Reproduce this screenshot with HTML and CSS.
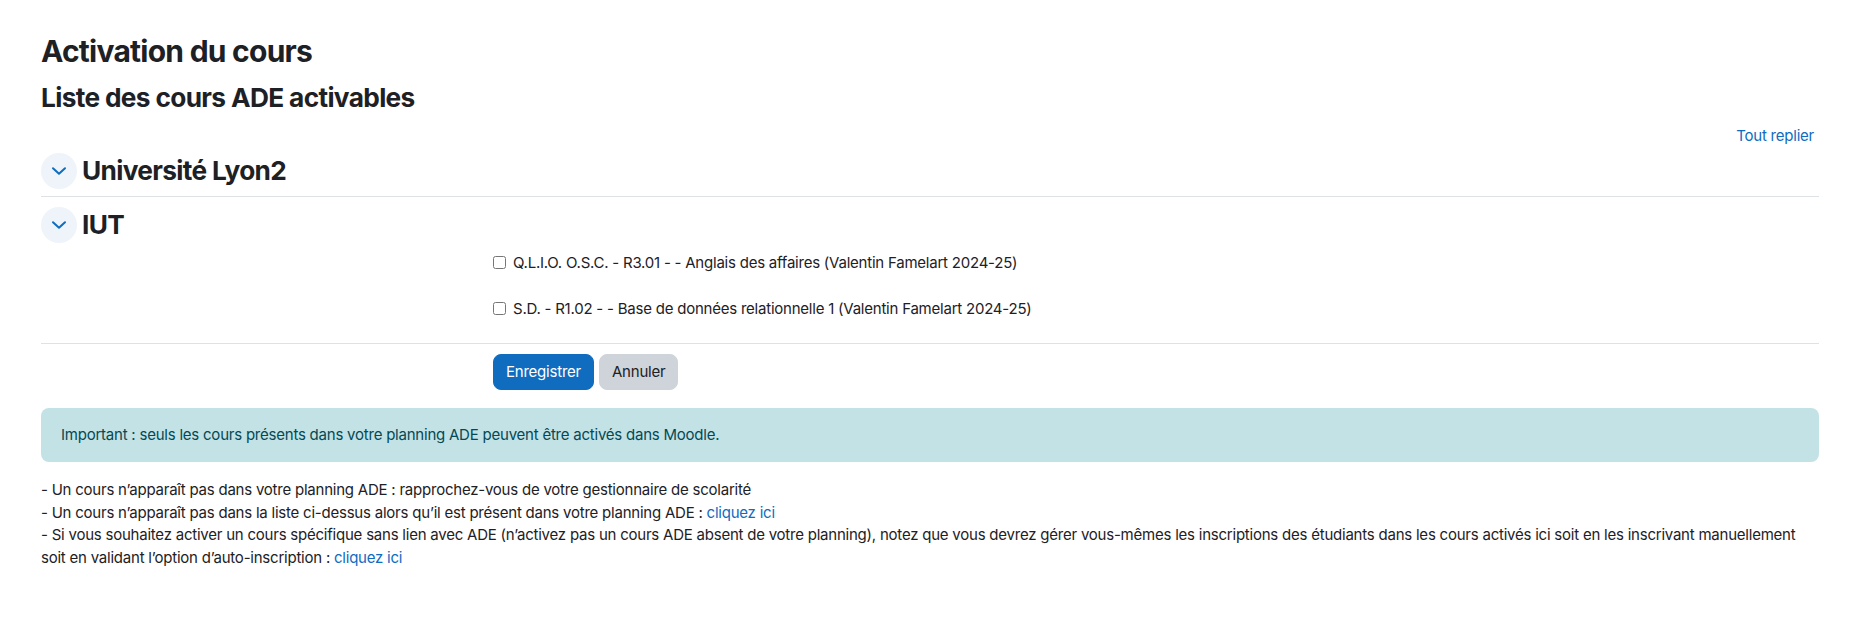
FILE: index.html
```html
<!DOCTYPE html>
<html lang="fr">
<head>
    <meta charset="UTF-8">
    <title>Activation du cours</title>
    <link rel="stylesheet" href="styles.css">
</head>
<body>
    <div class="page">
        <h2 class="page-title">Activation du cours</h2>
        <h3 class="list-title">Liste des cours ADE activables</h3>

        <div class="collapse-all"><a href="#">Tout replier</a></div>

        <form class="course-form" onsubmit="return false">
            <div class="group">
                <div class="group-head">
                    <span class="toggle">
                        <svg width="16" height="16" viewBox="0 0 16 16"><path d="M2 5.2 L8 10.8 L14 5.2" fill="none" stroke="#0f6cbf" stroke-width="2" stroke-linecap="round" stroke-linejoin="round"/></svg>
                    </span>
                    <h3>Université Lyon2</h3>
                </div>
            </div>

            <div class="group">
                <div class="group-head second">
                    <span class="toggle">
                        <svg width="16" height="16" viewBox="0 0 16 16"><path d="M2 5.2 L8 10.8 L14 5.2" fill="none" stroke="#0f6cbf" stroke-width="2" stroke-linecap="round" stroke-linejoin="round"/></svg>
                    </span>
                    <h3>IUT</h3>
                </div>
                <div class="group-body">
                    <div class="fitem">
                        <div class="flabel"></div>
                        <label class="check"><input type="checkbox"> Q.L.I.O. O.S.C. - R3.01 - - Anglais des affaires (Valentin Famelart 2024-25)</label>
                    </div>
                    <div class="fitem">
                        <div class="flabel"></div>
                        <label class="check"><input type="checkbox"> S.D. - R1.02 - - Base de données relationnelle 1 (Valentin Famelart 2024-25)</label>
                    </div>
                </div>
            </div>

            <div class="fitem buttons">
                <div class="flabel"></div>
                <div class="btns">
                    <button class="btn btn-primary" type="submit">Enregistrer</button>
                    <button class="btn btn-secondary" type="button">Annuler</button>
                </div>
            </div>
        </form>

        <div class="alert">Important : seuls les cours présents dans votre planning ADE peuvent être activés dans Moodle.</div>

        <p class="notes">
            - Un cours n’apparaît pas dans votre planning ADE : rapprochez-vous de votre gestionnaire de scolarité<br>
            - Un cours n’apparaît pas dans la liste ci-dessus alors qu’il est présent dans votre planning ADE : <a href="#">cliquez ici</a><br>
            - Si vous souhaitez activer un cours spécifique sans lien avec ADE (n’activez pas un cours ADE absent de votre planning), notez que vous devrez gérer vous-mêmes les inscriptions des étudiants dans les cours activés ici soit en les inscrivant manuellement soit en validant l’option d’auto-inscription : <a href="#">cliquez ici</a>
        </p>
    </div>
</body>
</html>
```

FILE: styles.css
```css
body { margin: 0; font-family: Inter, "Noto Sans", sans-serif; font-size: 15px; line-height: 22.5px; letter-spacing: -0.015em; color: #1d2125; background: #fff; }
a { color: #0f6cbf; text-decoration: none; }
.page { padding: 33px 34px 0 41px; }
.page-title { margin: 0 0 12.75px; font-size: 30px; line-height: 36px; font-weight: 700; letter-spacing: -0.025em; }
.list-title { margin: 0; font-size: 26.25px; line-height: 31.5px; font-weight: 700; letter-spacing: -0.025em; }
.collapse-all { margin-top: 12px; padding-right: 5px; text-align: right; }
.group { border-bottom: 1px solid #dee2e6; }
.group-head { display: flex; align-items: center; padding: 5px 0 7px; }
.group-head.second { padding: 10px 0 5px; }
.group-head h3 { margin: 0 0 0 5px; font-size: 26.25px; line-height: 31.5px; font-weight: 700; letter-spacing: -0.025em; }
.toggle { width: 36px; height: 36px; border-radius: 50%; background: #eef4fa; display: flex; align-items: center; justify-content: center; }
.group-body { padding-bottom: 3px; }
.fitem { display: grid; grid-template-columns: 25% 75%; }
.group-body .fitem { height: 30px; margin-bottom: 16px; align-items: center; }
.check { padding-left: 7.5px; display: flex; align-items: center; }
.check input { margin: 0 7px 0 0; width: 13px; height: 13px; }
.buttons { margin-top: 10px; }
.btns { padding-left: 7.5px; display: flex; gap: 5px; }
.btn { font-family: inherit; font-size: 15px; line-height: 22.5px; letter-spacing: inherit; padding: 6px 12px; border: 1px solid transparent; border-radius: 8px; cursor: pointer; }
.btn-primary { background: #0f6cbf; border-color: #0f6cbf; color: #fff; }
.btn-secondary { background: #ced4da; border-color: #ced4da; color: #1d2125; }
.alert { margin-top: 18px; padding: 15.75px 20px; background: #c2e2e6; color: #044953; border-radius: 8px; }
.notes { margin: 17px 0 0; }
```
